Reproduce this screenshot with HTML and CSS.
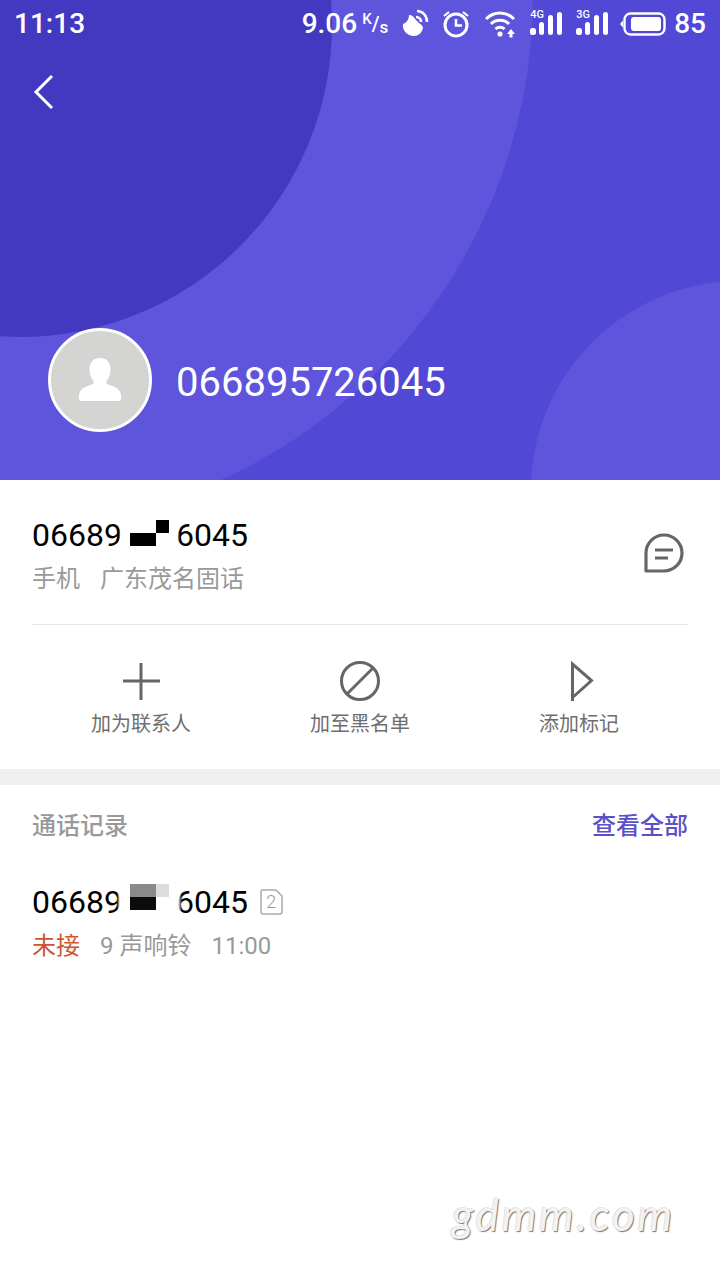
FILE: index.html
```html
<!DOCTYPE html>
<html lang="zh">
<head>
<meta charset="utf-8">
<title>通话详情</title>
<link rel="stylesheet" href="styles.css">
</head>
<body>
<div class="page">
  <header class="hero">
    <svg class="hero-bg" width="720" height="480" viewBox="0 0 720 480" aria-hidden="true">
      <rect width="720" height="480" fill="#5248d6"/>
      <circle cx="0" cy="-5" r="533" fill="#5e55dc"/>
      <circle cx="20" cy="25" r="312" fill="#4339c1"/>
      <circle cx="740" cy="490" r="209" fill="#5e55dc"/>
    </svg>
    <div class="status">
      <span class="time">11:13</span>
      <div class="status-right">
        <span class="speed">9.06</span>
        <span class="unit"><sup>K</sup>/<sub>s</sub></span>
        <svg class="ic-sat" width="27" height="28" viewBox="0 0 27 28"><path d="M1 15c3-1 6-4 6-9 3 0 5 2 6 4l4 4c2 1 4 3 4 5-1 5-5 8-9 8-7 0-12-6-11-12z" fill="#fff"/><path d="M14 8c3 0 5 2 5 5M15 2c6 0 10 5 10 11" fill="none" stroke="#fff" stroke-width="2.600"/></svg>
        <svg class="ic-alarm" width="28" height="28" viewBox="0 0 28 28"><circle cx="14" cy="15" r="11" fill="none" stroke="#fff" stroke-width="3"/><path d="M14 9v6.500h6" fill="none" stroke="#fff" stroke-width="2.600"/><path d="M2 6l5-4M26 6l-5-4" stroke="#fff" stroke-width="2.200"/></svg>
        <svg class="ic-wifi" width="31" height="28" viewBox="0 0 31 28"><path d="M1 9c8-8 20-8 28 0M6 14c5-5 13-5 18 0M10.500 19c2.500-2.500 6.500-2.500 9 0" fill="none" stroke="#fff" stroke-width="3"/><circle cx="15" cy="24" r="2.600" fill="#fff"/><path d="M26 19l4 5h-2.500v3.500h-3v-3.500H22z" fill="#fff"/></svg>
        <span class="signal"><b>4G</b><i class="b1"></i><i class="b2"></i><i class="b3"></i><i class="b4"></i></span>
        <span class="signal"><b>3G</b><i class="b1"></i><i class="b2"></i><i class="b3"></i><i class="b4"></i></span>
        <svg class="ic-batt" width="46" height="24" viewBox="0 0 46 24"><path d="M3 8.500 0 12l3 3.500z" fill="#fff"/><rect x="4.500" y="1.500" width="40" height="21" rx="6" fill="none" stroke="#fff" stroke-width="2.400"/><rect x="11" y="5" width="30" height="14" rx="3" fill="#fff"/></svg>
        <span class="batt-num">85</span>
      </div>
    </div>
    <div class="back-row">
      <svg width="22" height="36" viewBox="0 0 22 36"><path d="M19 2 3 18l16 16" fill="none" stroke="#fff" stroke-width="3"/></svg>
    </div>
    <div class="profile">
      <div class="avatar">
        <svg width="46" height="48" viewBox="0 0 48 48"><path d="M24 1c7 0 11 5 11 12 0 5-2 9-4 12-1 2 0 3 2 4 6 2 13 4 13 12 0 3 0 5-3 5H5c-3 0-3-2-3-5 0-8 7-10 13-12 2-1 3-2 2-4-2-3-4-7-4-12C13 6 17 1 24 1z" fill="#fff"/></svg>
      </div>
      <span class="name">066895726045</span>
    </div>
  </header>

  <section class="info">
    <div class="contact">
      <div class="contact-text">
        <div class="number">06689<span class="gap gap-a"><i class="px a1"></i><i class="px a2"></i></span>6045</div>
        <div class="sub"><span>手机</span><span>广东茂名固话</span></div>
      </div>
      <svg class="msg" width="42" height="42" viewBox="0 0 42 42"><path d="M3 39V21a18 18 0 1 1 18 18z" fill="none" stroke="#666" stroke-width="3.200" stroke-linejoin="round"/><path d="M12 18h18M12 26h13" stroke="#666" stroke-width="3.200"/></svg>
    </div>
    <div class="actions">
      <div class="action">
        <svg width="40" height="40" viewBox="0 0 40 40"><path d="M20 2v37M2 20h37" stroke="#666" stroke-width="3"/></svg>
        <span>加为联系人</span>
      </div>
      <div class="action">
        <svg width="42" height="40" viewBox="0 0 42 40"><circle cx="21" cy="20" r="18.500" fill="none" stroke="#666" stroke-width="3"/><path d="M8 33 34 7" stroke="#666" stroke-width="3"/></svg>
        <span>加至黑名单</span>
      </div>
      <div class="action">
        <svg width="40" height="40" viewBox="0 0 40 40"><path d="M13.500 40V3l19 16.500-19 17" fill="none" stroke="#666" stroke-width="3"/></svg>
        <span>添加标记</span>
      </div>
    </div>
  </section>

  <section class="records">
    <div class="rec-head"><span class="rec-title">通话记录</span><span class="rec-all">查看全部</span></div>
    <div class="number rec-num">06689<span class="gap gap-b"><i class="px b-1"></i><i class="px b-2"></i><i class="px b-3"></i></span>6045<span class="sim"><svg width="23" height="26" viewBox="0 0 23 26"><path d="M2.500 1h13.500l6 6v15.500c0 1.500-1 2.500-2.500 2.500h-17c-1 0-1.500-1-1.500-2.500v-19.500c0-1 .5-2 1.500-2z" fill="none" stroke="#aaa" stroke-width="1.500"/></svg><span class="sim-n">2</span></span></div>
    <div class="sub rec-sub"><span class="missed">未接</span><span>9 声响铃</span><span>11:00</span></div>
  </section>

  <div class="mark">gdmm.com</div>
</div>
</body>
</html>
```

FILE: styles.css
```css
* { box-sizing: border-box; }
html, body { margin: 0; padding: 0; }
body { background: #fff; font-family: Roboto, "Noto Sans CJK SC", sans-serif; }
.page { position: relative; width: 720px; height: 1280px; overflow: hidden; background: #fff; }

.hero { position: relative; height: 480px; display: flex; flex-direction: column; color: #fff; }
.hero-bg { position: absolute; left: 0; top: 0; }
.status, .back-row, .profile { position: relative; }

.status { height: 46px; padding: 1px 14px 0; display: flex; align-items: center; justify-content: space-between; font-weight: 500; }
.time { font-size: 28px; line-height: 46px; }
.status-right { display: flex; align-items: center; }
.speed { font-size: 28px; line-height: 46px; }
.unit { width: 25px; margin-left: 5px; font-size: 20px; line-height: 20px; display: flex; align-items: center; }
.unit sup, .unit sub { line-height: 1; vertical-align: baseline; }
.unit sup { margin-top: -9px; font-size: 15px; }
.unit sub { margin-top: 8px; font-size: 17px; }
.ic-sat { margin-left: 15px; margin-top: -1px; }
.ic-alarm { margin-left: 13px; }
.ic-wifi { margin-left: 15px; }
.signal { position: relative; width: 32px; height: 24px; margin-left: 14px; margin-top: -2px; display: flex; align-items: flex-end; gap: 3.500px; }
.signal + .signal { margin-left: 14px; }
.signal b { position: absolute; left: 0; top: -2px; font-size: 11px; line-height: 12px; font-weight: 500; }
.signal i { display: block; width: 5.500px; border-radius: 2.500px; background: #fff; }
.signal .b1 { height: 7px; }
.signal .b2 { height: 13px; }
.signal .b3 { height: 20px; }
.signal .b4 { height: 23px; }
.ic-batt { margin-left: 12px; }
.batt-num { margin-left: 8px; font-size: 28px; line-height: 46px; }

.back-row { padding: 28px 0 0 33px; height: 82px; display: flex; align-items: flex-start; }
.profile { margin-top: 200px; display: flex; align-items: center; padding-left: 48px; }
.avatar { width: 104px; height: 104px; border-radius: 50%; background: #d4d4d2; border: 3px solid #fff; display: flex; align-items: center; justify-content: center; }
.name { margin-left: 24px; padding-top: 6px; font-size: 40px; line-height: 48px; }

.info { height: 289px; padding: 0 32px; }
.contact { height: 145px; display: flex; justify-content: space-between; align-items: center; border-bottom: 1px solid #e6e6e6; padding: 0 3px 0 0; }
.contact-text { margin-top: 10px; }
.number { font-size: 32px; line-height: 44px; color: #000; display: flex; align-items: center; }
.sub { font-size: 24px; line-height: 44px; color: #999; display: flex; gap: 20px; }
.gap { position: relative; display: block; flex: none; width: 54px; height: 44px; }
.gap::before { content: ""; position: absolute; top: 2px; bottom: 2px; }
.gap-a::before { left: -3px; width: 61px; background: linear-gradient(90deg, rgba(255,255,255,0), #fff 3px, #fff 56px, rgba(255,255,255,0)); }
.gap-b::before { left: -5px; width: 65px; background: linear-gradient(90deg, rgba(255,255,255,0), #fff 3px, #fff 61px, rgba(255,255,255,0)); }
.px { position: absolute; display: block; }
.a1 { left: 8px; top: 20px; width: 26px; height: 13px; background: #000; }
.a2 { left: 34px; top: 7px; width: 13px; height: 13px; background: #000; }
.msg { margin-top: 2px; }
.actions { display: flex; justify-content: space-between; padding-top: 36px; }
.action { width: 218px; display: flex; flex-direction: column; align-items: center; color: #6e6e6e; font-size: 20px; line-height: 28px; gap: 9px; }

.records { border-top: 16px solid #f0f0f0; padding: 0 32px; }
.rec-head { height: 76px; display: flex; justify-content: space-between; align-items: center; font-size: 24px; font-weight: 500; }
.rec-title { color: #999; }
.rec-all { color: #5a50c8; }
.rec-num { margin-top: 19px; }
.b-1 { left: 8px; top: 4px; width: 26px; height: 13px; background: #8a8a8a; }
.b-2 { left: 34px; top: 4px; width: 13px; height: 13px; background: #dcdcdc; }
.b-3 { left: 8px; top: 17px; width: 26px; height: 13px; background: #0c0c0c; }
.sim { position: relative; display: flex; align-items: center; justify-content: center; width: 23px; height: 26px; margin-left: 12px; }
.sim svg { position: absolute; left: 0; top: 0; }
.sim-n { position: relative; color: #999; font-size: 18px; line-height: 26px; font-weight: 300; }
.rec-sub { gap: 20px; }
.missed { color: #d0532f; }

.mark { position: absolute; left: 452px; top: 1186px; font-family: Lato, sans-serif; font-style: italic; font-size: 44px; line-height: 56px; letter-spacing: 2.800px; color: #f3f3f3; text-shadow: 1px 1px 1px #777, -1px -1px 0 #e6e6e6; }
```
